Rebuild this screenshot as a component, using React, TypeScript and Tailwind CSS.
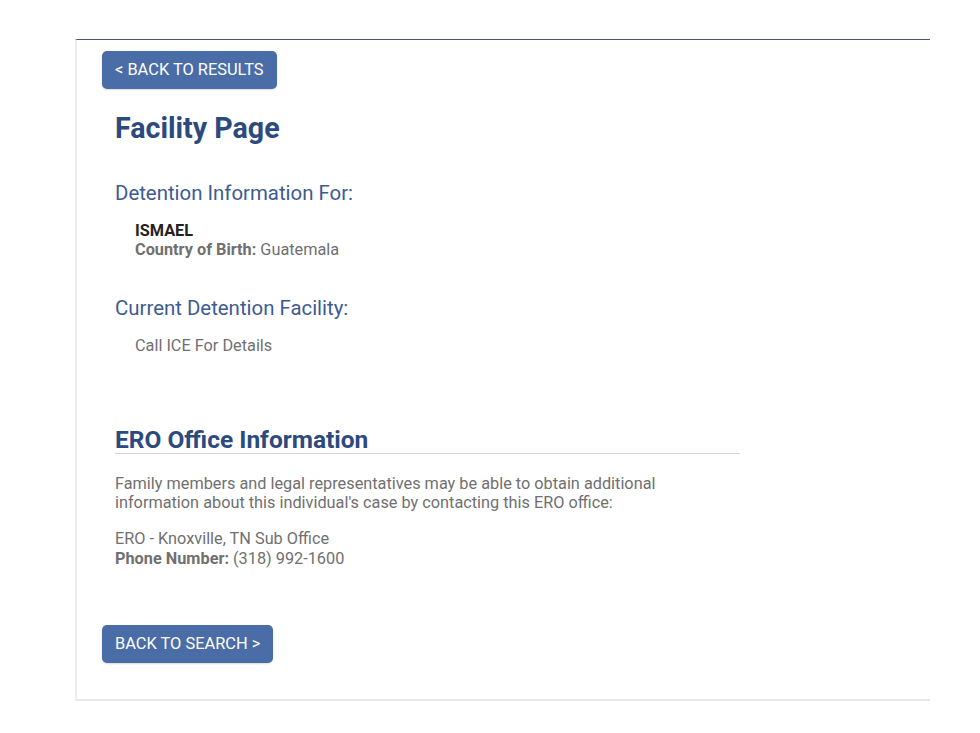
import React from "react";

function BlueButton({ children }: { children: React.ReactNode }) {
  return (
    <button
      type="button"
      className="h-[38px] rounded-[5px] bg-[#4a6da8] px-[13px] text-[16.4px] leading-[38px] text-white shadow-[0_1px_2px_rgba(0,0,0,0.15)]"
    >
      {children}
    </button>
  );
}

export default function App() {
  return (
    <div className="min-h-[733px] bg-white pt-[39px] font-['Roboto',sans-serif]">
      <div className="ml-[75px] w-[855px] border-t border-l-2 border-b-2 border-t-[#50546a] border-l-[#ededed] border-b-[#e8e8e8] pl-[25px] pt-[11px] pb-[36px]">
        <BlueButton>&lt; BACK TO RESULTS</BlueButton>

        <div className="pl-[13px]">
          <h1 className="mt-[22px] text-[28.6px] font-bold leading-[34px] text-[#2d4a7f]">Facility Page</h1>

          <h2 className="mt-[36px] text-[20.4px] leading-[24px] text-[#3c5b92]">Detention Information For:</h2>
          <div className="mt-[16px] pl-[20px] text-[16.3px] leading-[19px]">
            <div className="font-bold text-[#222]">ISMAEL</div>
            <div className="text-[#707070]">
              <span className="font-bold">Country of Birth:</span> Guatemala
            </div>
          </div>

          <h2 className="mt-[37px] text-[20.4px] leading-[24px] text-[#3c5b92]">Current Detention Facility:</h2>
          <div className="mt-[16px] pl-[20px] text-[16.3px] leading-[19px] text-[#707070]">Call ICE For Details</div>

          <h2 className="mt-[72px] w-[625px] border-b border-[#d3d7df] text-[24.5px] font-bold leading-[26px] text-[#2d4a7f]">
            ERO Office Information
          </h2>
          <p className="mt-[20px] w-[580px] text-[16.3px] leading-[19px] text-[#707070]">
            Family members and legal representatives may be able to obtain additional information about this
            individual's case by contacting this ERO office:
          </p>
          <div className="mt-[17px] text-[16.3px] leading-[20px] text-[#707070]">
            <div>ERO - Knoxville, TN Sub Office</div>
            <div>
              <span className="font-bold">Phone Number:</span> (318) 992-1600
            </div>
          </div>
        </div>

        <div className="mt-[56px]">
          <BlueButton>BACK TO SEARCH &gt;</BlueButton>
        </div>
      </div>
    </div>
  );
}
